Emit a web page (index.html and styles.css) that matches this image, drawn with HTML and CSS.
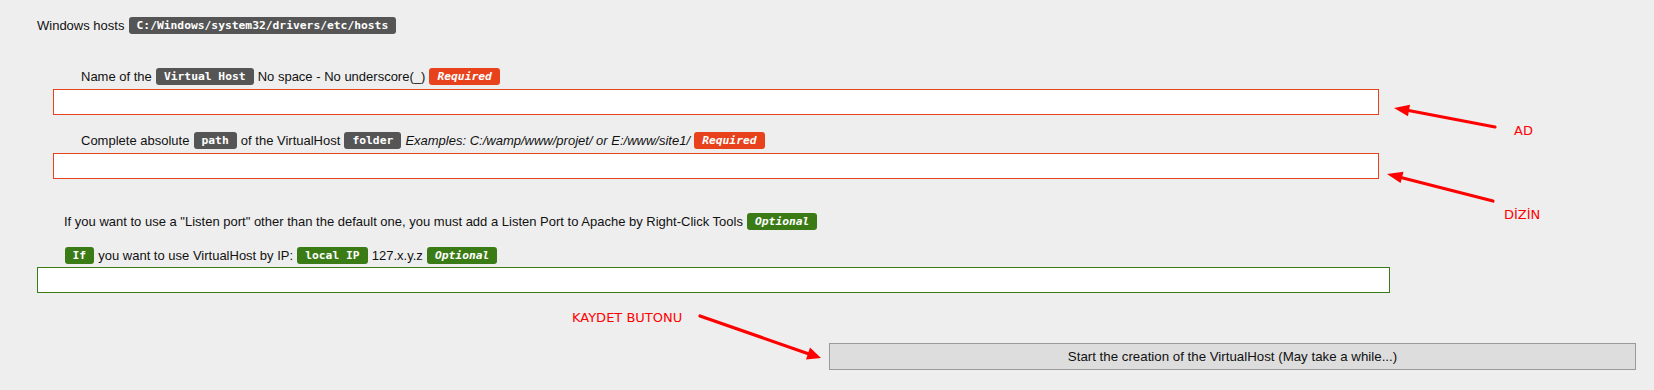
FILE: index.html
```html
<!DOCTYPE html>
<html>
<head>
<meta charset="utf-8">
<link rel="stylesheet" href="styles.css">
</head>
<body>
<div class="page">
  <div class="row hosts">Windows hosts <span class="badge gray">C:/Windows/system32/drivers/etc/hosts</span></div>

  <div class="row label-in">Name of the <span class="badge gray">Virtual Host</span> No space - No underscore(_) <span class="badge red it">Required</span></div>
  <input class="field red-field" type="text">

  <div class="row label-in second">Complete absolute <span class="badge gray">path</span> of the VirtualHost <span class="badge gray">folder</span> <i>Examples: C:/wamp/www/projet/ or E:/www/site1/</i> <span class="badge red it">Required</span></div>
  <input class="field red-field" type="text">

  <div class="row label-out port">If you want to use a "Listen port" other than the default one, you must add a Listen Port to Apache by Right-Click Tools <span class="badge green it">Optional</span></div>

  <div class="row label-out ip"><span class="badge green">If</span> you want to use VirtualHost by IP: <span class="badge green">local IP</span> 127.x.y.z <span class="badge green it">Optional</span></div>
  <input class="field green-field" type="text">

  <div class="actions">
    <button class="submit" type="button">Start the creation of the VirtualHost (May take a while...)</button>
  </div>
</div>

<svg class="notes" width="1654" height="390" viewBox="0 0 1654 390">
  <g stroke="#ff0000" stroke-width="3.2" stroke-linecap="round" fill="none">
    <line x1="1495" y1="127" x2="1406" y2="110"/>
    <line x1="1493" y1="201" x2="1399" y2="177"/>
    <line x1="700" y1="316" x2="809" y2="354"/>
  </g>
  <g fill="#ff0000">
    <polygon points="1394,108 1410,104.8 1408,116.2"/>
    <polygon points="1387,174 1403.5,171.8 1400.6,183"/>
    <polygon points="821,358 806,359.5 810,347.5"/>
  </g>
  <g class="note-text" fill="#ff0000">
    <text x="1514" y="135">AD</text>
    <text x="1504" y="219">DİZİN</text>
    <text x="572" y="321.5">KAYDET BUTONU</text>
  </g>
</svg>
</body>
</html>
```

FILE: styles.css
```css
html, body {
  margin: 0;
  padding: 0;
  background: #eeeeee;
}
body {
  position: relative;
  width: 1654px;
  height: 390px;
  overflow: hidden;
  font-family: "Liberation Sans", Arial, sans-serif;
  font-size: 13px;
  color: #111111;
}
.page {
  padding-top: 17px;
}
.row {
  height: 17px;
  line-height: 17px;
  white-space: nowrap;
}
.hosts {
  padding-left: 37px;
}
.label-in {
  padding-left: 81px;
  margin-top: 34px;
}
.label-in.second {
  margin-top: 17px;
}
.label-out {
  padding-left: 64px;
}
.port {
  margin-top: 34px;
}
.ip {
  margin-top: 17px;
}
.badge {
  display: inline-block;
  height: 17px;
  line-height: 18px;
  padding: 0 8px;
  margin: 0 0.5px;
  border-radius: 3px;
  color: #ffffff;
  font-family: "DejaVu Sans Mono", "Liberation Mono", monospace;
  font-weight: bold;
  font-size: 11.3px;
  vertical-align: top;
}
.badge.it {
  font-style: italic;
}
.gray { background: #555555; }
.red { background: #e8421c; }
.green { background: #3a7b16; }
.field {
  display: block;
  box-sizing: border-box;
  margin: 4px 0 0 53px;
  width: 1326px;
  height: 26px;
  padding: 0;
  background: #ffffff;
  outline: none;
}
.red-field {
  border: 1px solid #e8421c;
}
.green-field {
  border: 1px solid #3a7b16;
  margin-left: 37px;
  width: 1353px;
  margin-top: 3px;
}
.actions {
  display: flex;
  justify-content: flex-end;
  padding-right: 18px;
  margin-top: 50px;
}
.submit {
  box-sizing: border-box;
  width: 807px;
  height: 27px;
  background: #dddddd;
  border: 1px solid #9a9a9a;
  border-radius: 0;
  color: #111111;
  font-family: "Liberation Sans", Arial, sans-serif;
  font-size: 13.3px;
  padding: 0;
}
.notes {
  position: absolute;
  top: 0;
  left: 0;
  pointer-events: none;
}
.note-text {
  font-family: "DejaVu Sans", sans-serif;
  font-size: 13px;
}
```
